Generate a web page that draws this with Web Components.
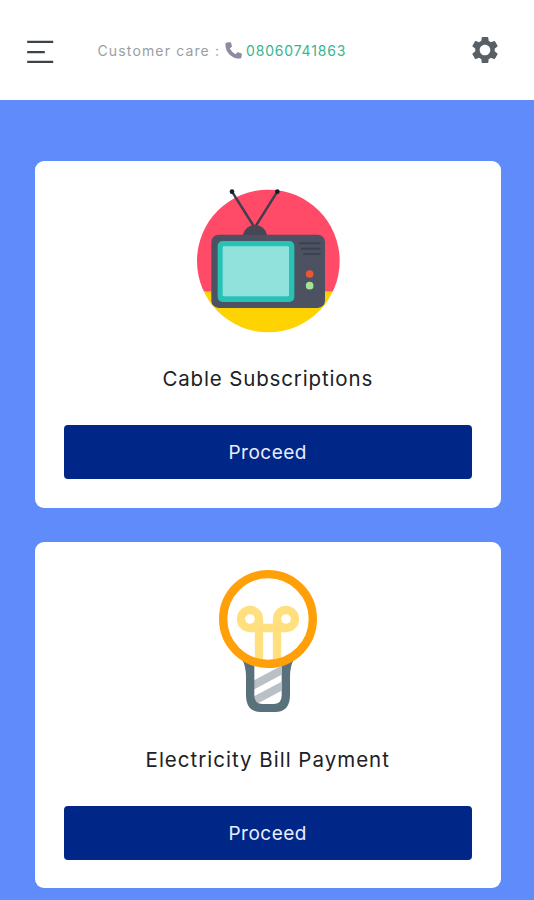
<!DOCTYPE html>
<html lang="en">
<head>
<meta charset="utf-8">
<title>Bill payments</title>
<style>
html,body{margin:0;height:100%;overflow:hidden}
body{background:#608bfb;font-family:Inter,"Liberation Sans",sans-serif;color:#202124}
</style>
</head>
<body>
<pay-app></pay-app>
<script>
const make = (tag, html) => customElements.define(tag, class extends HTMLElement {
  constructor() {
    super();
    this.attachShadow({mode: 'open'}).innerHTML = html;
  }
});

make('menu-icon', `<style>:host{display:block;width:27px;height:24px}svg{display:block}</style>
<svg width="27" height="24" viewBox="0 0 27 24" stroke="#3c4449" stroke-width="2.2"><path d="M.2 1.9h26M.2 12.1h17.6M.2 21.9h26"/></svg>`);

make('gear-icon', `<style>:host{display:block;width:26px;height:26px}svg{display:block}</style>
<svg width="26" height="26" viewBox="2.2 2 19.6 20"><path fill="#586066" d="M19.43 12.98c.04-.32.07-.64.07-.98s-.03-.66-.07-.98l2.11-1.65c.19-.15.24-.42.12-.64l-2-3.46c-.12-.22-.39-.3-.61-.22l-2.49 1c-.52-.4-1.08-.73-1.69-.98l-.38-2.65C14.46 2.18 14.25 2 14 2h-4c-.25 0-.46.18-.49.42l-.38 2.65c-.61.25-1.17.59-1.69.98l-2.49-1c-.23-.09-.49 0-.61.22l-2 3.46c-.13.22-.07.49.12.64l2.11 1.65c-.04.32-.07.65-.07.98s.03.66.07.98l-2.11 1.65c-.19.15-.24.42-.12.64l2 3.46c.12.22.39.3.61.22l2.49-1c.52.4 1.08.73 1.69.98l.38 2.65c.03.24.24.42.49.42h4c.25 0 .46-.18.49-.42l.38-2.65c.61-.25 1.17-.59 1.69-.98l2.49 1c.23.09.49 0 .61-.22l2-3.46c.12-.22.07-.49-.12-.64l-2.11-1.65zM12 16.100c-2.260 0-4.100-1.840-4.100-4.100s1.840-4.100 4.100-4.100 4.100 1.840 4.100 4.100-1.840 4.100-4.100 4.100z"/></svg>`);

make('phone-icon', `<style>:host{display:block;width:17px;height:17px}svg{display:block}</style>
<svg width="17" height="17" viewBox="3 3 18 18"><path fill="#8d8ba3" d="M6.500 3.200 8.600 3.200Q9.300 3.300 9.500 4L10.300 7.300Q10.400 7.900 9.900 8.300L8 9.900Q10.300 14 14.200 16L15.800 14.200Q16.200 13.700 16.900 13.900L20.200 14.800Q20.900 15.100 20.900 15.800L20.300 19.500Q20.100 20.600 19 20.600C10 20.600 3.400 14 3.400 5Q3.400 4.100 4.300 3.800Z"/></svg>`);

make('tv-picture', `<style>:host{display:block;width:144px;height:144px}svg{display:block}</style>
<svg width="144" height="144" viewBox="48 42 432 432">
<clipPath id="disc"><circle cx="265" cy="258" r="214"/></clipPath>
<g clip-path="url(#disc)"><path fill="#ff4a68" d="M48 42h432v308H48z"/><path fill="#ffd202" d="M48 350h432v130H48z"/></g>
<path d="M156 50 224 158 292 50" fill="none" stroke="#403d4c" stroke-width="7.500"/>
<circle cx="156" cy="50" r="7" fill="#10202c"/><circle cx="292" cy="50" r="7" fill="#10202c"/>
<path fill="#464655" d="M188 182Q196 150 225 150T262 182Z"/>
<rect x="94" y="179" width="341" height="220" rx="22" fill="#4d5262"/>
<rect x="113" y="198" width="230" height="183" rx="15" fill="#28c2b5"/>
<rect x="128" y="214" width="199" height="150" rx="4" fill="#91e2dc"/>
<path d="M360 205h59M366 221h53M372 237h47" stroke="#3c4150" stroke-width="6" stroke-linecap="round"/>
<circle cx="389" cy="297" r="11.500" fill="#eb5733"/><circle cx="389" cy="332" r="11.500" fill="#a4e394"/>
</svg>`);

make('bulb-picture', `<style>:host{display:block;width:104px;height:143px}svg{display:block}</style>
<svg width="104" height="143" viewBox="78 30 312 429">
<clipPath id="base"><rect x="190" y="318" width="84" height="115"/></clipPath>
<g clip-path="url(#base)" stroke="#b9c1c6" stroke-width="24"><path d="M180 381 285 325M180 429 285 373"/></g>
<path fill="#58717b" d="M157 300Q168 320 168 350V405Q168 456 213 456H255Q300 456 300 405V350Q300 320 311 300L275 318V407Q275 432 250 432H218Q193 432 193 407V318Z"/>
<g fill="none" stroke="#ffdf7e" stroke-width="25"><circle cx="180" cy="177" r="27"/><circle cx="288" cy="177" r="27"/><path d="M180 204H288M207 310V177M261 177V310"/></g>
<circle cx="234" cy="177" r="134.500" fill="none" stroke="#ff9f09" stroke-width="25"/>
</svg>`);

make('app-header', `<style>
:host{display:flex;box-sizing:border-box;height:100px;padding:0 36px 0 27px;align-items:center;background:#fff}
.care{display:flex;align-items:center;margin-left:43.500px;font-size:14px;line-height:20px;color:#9b9ea2;white-space:nowrap;margin-top:1px}
.label{letter-spacing:1.14px;width:127.500px}
.number{color:#36b58e;letter-spacing:.82px;margin-left:4px}
gear-icon{margin-left:auto}
menu-icon{margin-top:3px}
</style><menu-icon></menu-icon><div class="care"><span class="label">Customer care :</span><phone-icon></phone-icon><span class="number">08060741863</span></div><gear-icon></gear-icon>`);

make('proceed-button', `<style>
:host{display:block}
button{display:block;width:100%;height:54px;padding:1px 0 0;border:0;border-radius:4px;background:#002687;color:#e9edfb;font:400 19px Inter,"Liberation Sans",sans-serif;letter-spacing:.5px}
</style><button><slot></slot></button>`);

make('service-card', `<style>
:host{display:flex;box-sizing:border-box;height:346.500px;padding:28px 29px;flex-direction:column;align-items:center;background:#fff;border-radius:9px}
.picture{height:144px}
h2{margin:31px 0 0;font-size:20.500px;line-height:30px;font-weight:400;letter-spacing:var(--title-spacing);white-space:nowrap}
proceed-button{align-self:stretch;margin-top:31px}
</style><div class="picture"><slot name="picture"></slot></div><h2><slot></slot></h2><proceed-button>Proceed</proceed-button>`);

make('pay-app', `<style>
:host{display:block}
main{display:grid;gap:34px;padding:61px 33px 0 34.500px}
.cable{--title-spacing:.85px}
.power{--title-spacing:1px}
</style><app-header></app-header><main>
<service-card class="cable"><tv-picture slot="picture"></tv-picture>Cable Subscriptions</service-card>
<service-card class="power"><bulb-picture slot="picture"></bulb-picture>Electricity Bill Payment</service-card>
</main>`);
</script>
</body>
</html>
